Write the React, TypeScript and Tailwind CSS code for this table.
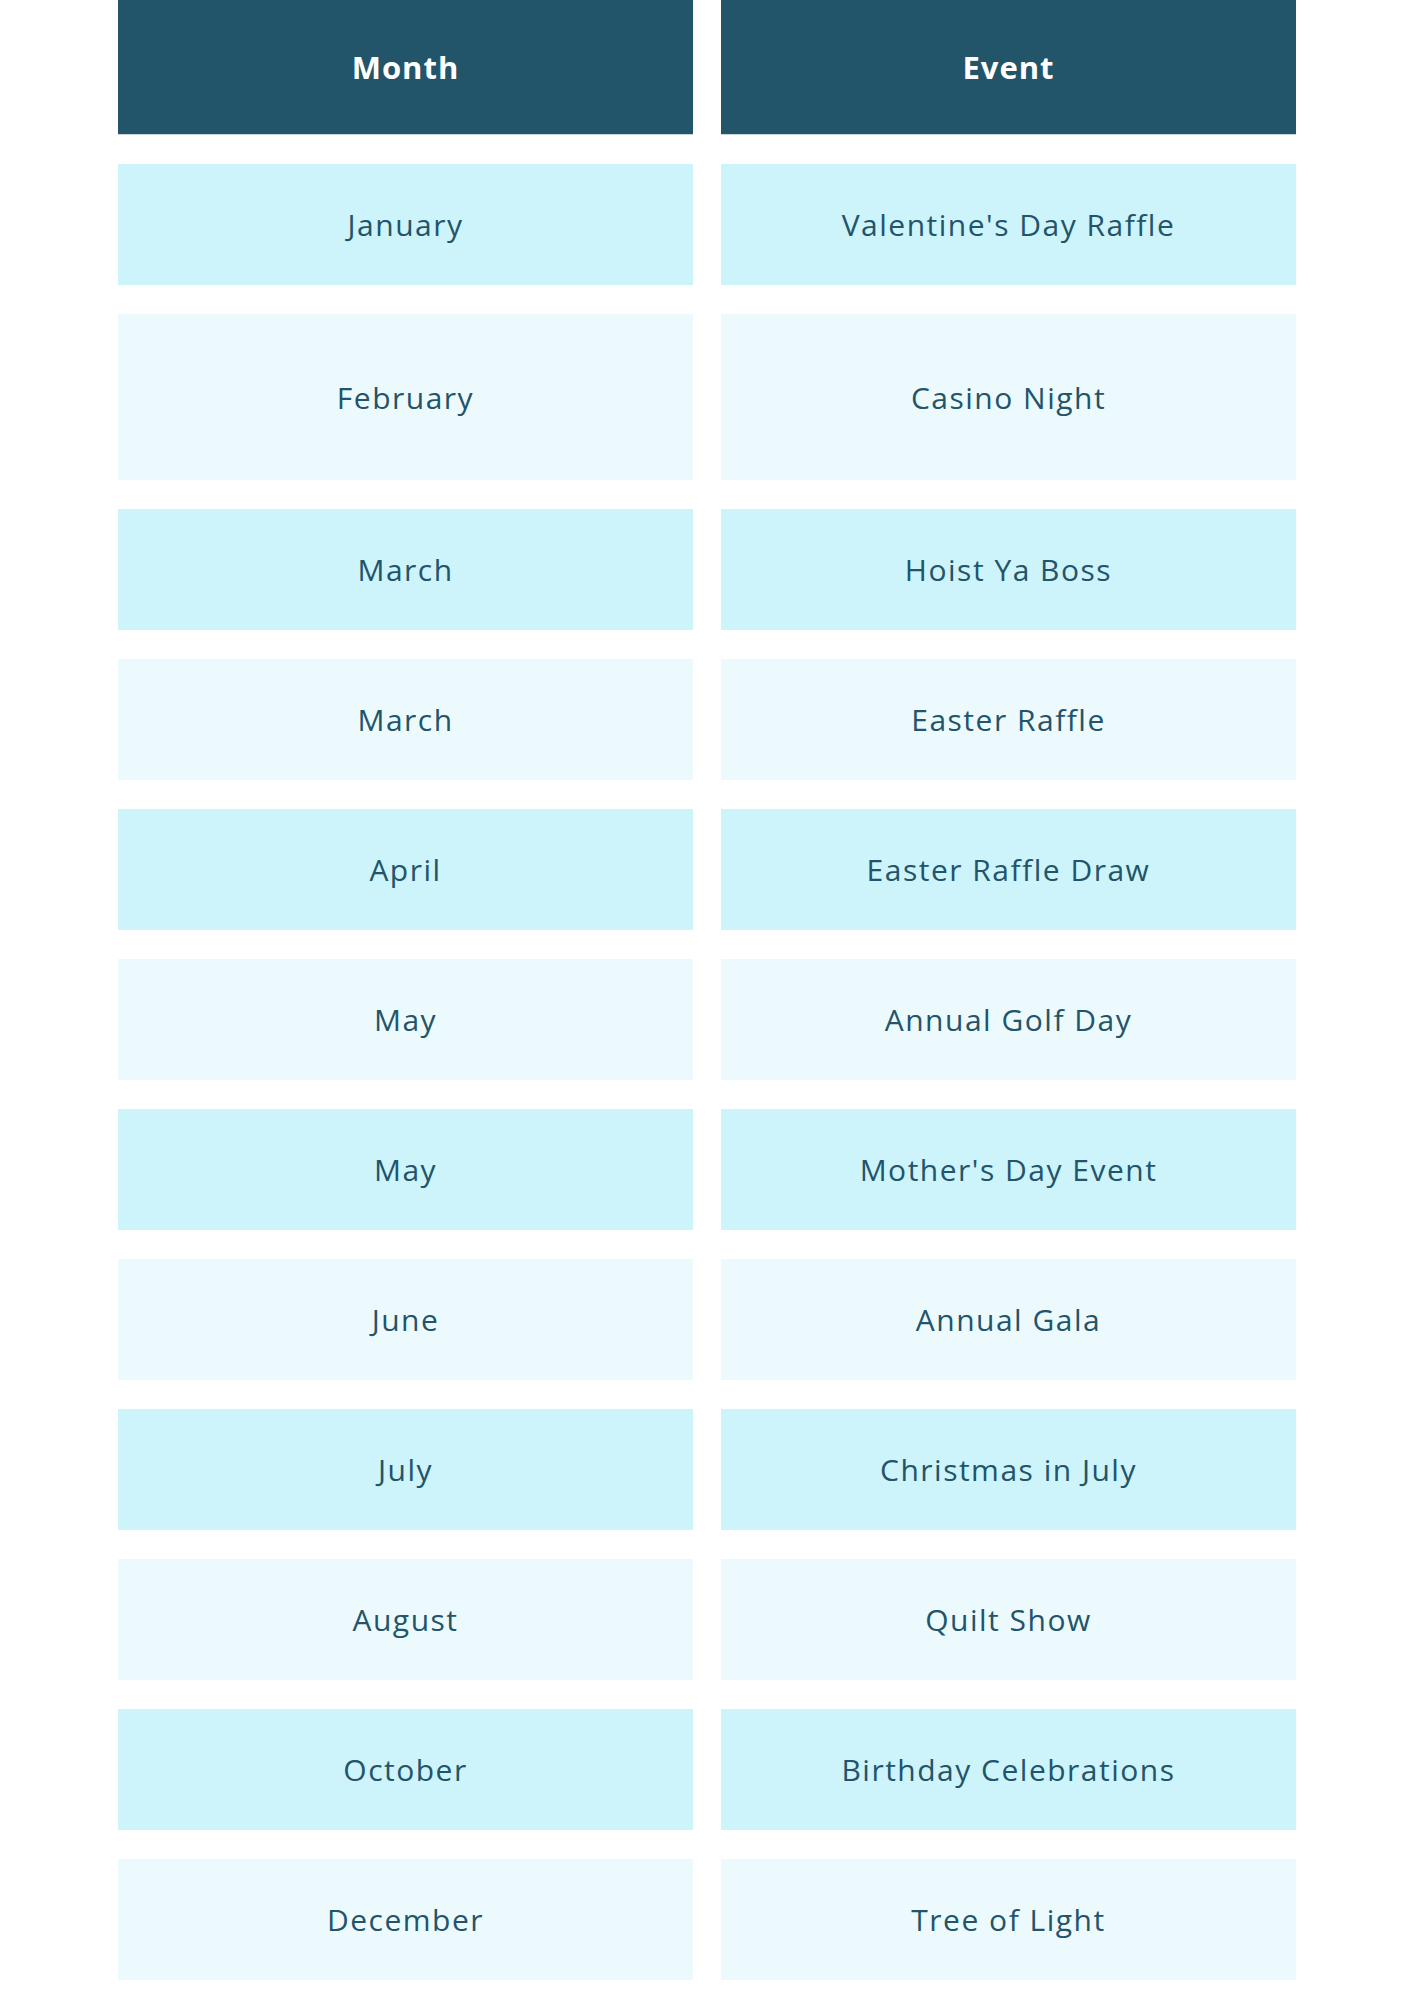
import React from "react";

const rows: [string, string][] = [
  ["January", "Valentine's Day Raffle"],
  ["February", "Casino Night"],
  ["March", "Hoist Ya Boss"],
  ["March", "Easter Raffle"],
  ["April", "Easter Raffle Draw"],
  ["May", "Annual Golf Day"],
  ["May", "Mother's Day Event"],
  ["June", "Annual Gala"],
  ["July", "Christmas in July"],
  ["August", "Quilt Show"],
  ["October", "Birthday Celebrations"],
  ["December", "Tree of Light"],
];

export default function App() {
  return (
    <div
      className="w-[1414px] bg-white pb-[22px]"
      style={{ fontFamily: '"Open Sans", "Liberation Sans", sans-serif' }}
    >
      <div className="mx-auto grid w-[1178px] grid-cols-2 gap-x-[28px] gap-y-[29px]">
        <div className="flex h-[135px] items-center justify-center bg-[#22546a] border-b border-[#c9d3d8] text-[31px] font-bold tracking-[1px] text-white">
          Month
        </div>
        <div className="flex h-[135px] items-center justify-center bg-[#22546a] border-b border-[#c9d3d8] text-[31px] font-bold tracking-[1px] text-white">
          Event
        </div>
        {rows.map(([m, e], i) => {
          const odd = i % 2 === 0;
          const h = i === 1 ? "h-[166px]" : "h-[121px]";
          const bg = odd ? "bg-[#cdf3fb]" : "bg-[#ecfafe]";
          return (
            <React.Fragment key={i}>
              <div className={`flex ${h} items-center justify-center ${bg} text-[30px] tracking-[1.5px] text-[#22546a]`}>
                {m}
              </div>
              <div className={`flex ${h} items-center justify-center ${bg} text-[30px] tracking-[1.5px] text-[#22546a]`}>
                {e}
              </div>
            </React.Fragment>
          );
        })}
      </div>
    </div>
  );
}
